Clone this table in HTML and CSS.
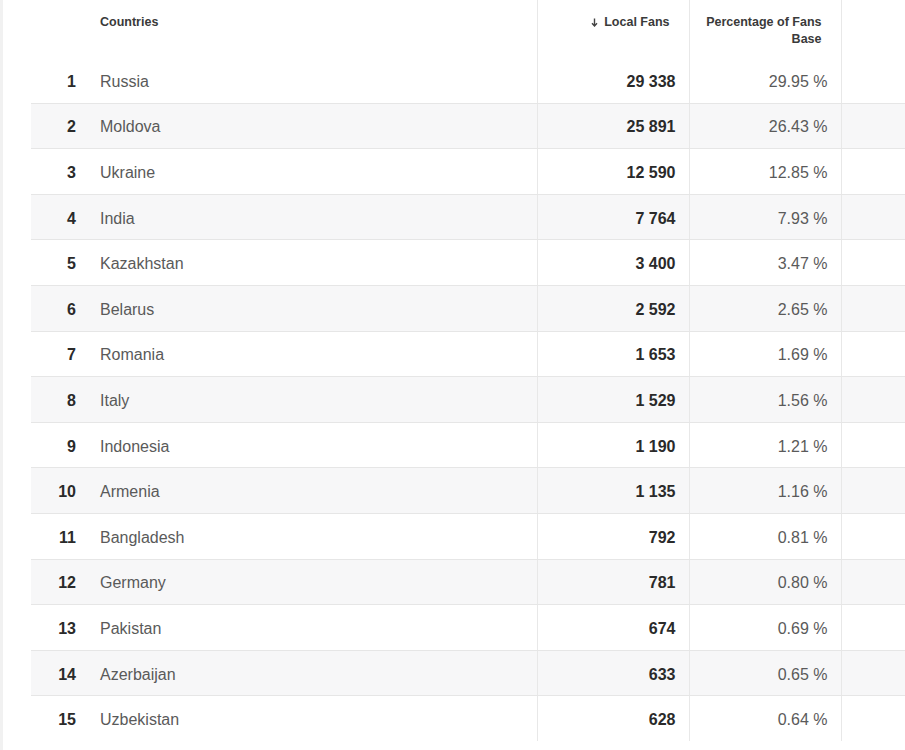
FILE: index.html
```html
<!DOCTYPE html>
<html>
<head>
<meta charset="utf-8">
<link rel="stylesheet" href="styles.css">
</head>
<body>
<div class="page">
  <table class="fans">
    <thead>
      <tr>
        <th class="c-rank"></th>
        <th class="c-country">Countries</th>
        <th class="c-fans"><svg class="arrow" width="7" height="9" viewBox="0 0 7 9"><path d="M3.5 0.5V7.5M1 5.2L3.5 8L6 5.2" stroke="#444" stroke-width="1.4" fill="none"/></svg>Local Fans</th>
        <th class="c-pct">Percentage of Fans<br>Base</th>
        <th class="c-rest"></th>
      </tr>
    </thead>
    <tbody>
      <tr><td class="c-rank">1</td><td class="c-country">Russia</td><td class="c-fans">29 338</td><td class="c-pct">29.95 %</td><td class="c-rest"></td></tr>
      <tr><td class="c-rank">2</td><td class="c-country">Moldova</td><td class="c-fans">25 891</td><td class="c-pct">26.43 %</td><td class="c-rest"></td></tr>
      <tr><td class="c-rank">3</td><td class="c-country">Ukraine</td><td class="c-fans">12 590</td><td class="c-pct">12.85 %</td><td class="c-rest"></td></tr>
      <tr><td class="c-rank">4</td><td class="c-country">India</td><td class="c-fans">7 764</td><td class="c-pct">7.93 %</td><td class="c-rest"></td></tr>
      <tr><td class="c-rank">5</td><td class="c-country">Kazakhstan</td><td class="c-fans">3 400</td><td class="c-pct">3.47 %</td><td class="c-rest"></td></tr>
      <tr><td class="c-rank">6</td><td class="c-country">Belarus</td><td class="c-fans">2 592</td><td class="c-pct">2.65 %</td><td class="c-rest"></td></tr>
      <tr><td class="c-rank">7</td><td class="c-country">Romania</td><td class="c-fans">1 653</td><td class="c-pct">1.69 %</td><td class="c-rest"></td></tr>
      <tr><td class="c-rank">8</td><td class="c-country">Italy</td><td class="c-fans">1 529</td><td class="c-pct">1.56 %</td><td class="c-rest"></td></tr>
      <tr><td class="c-rank">9</td><td class="c-country">Indonesia</td><td class="c-fans">1 190</td><td class="c-pct">1.21 %</td><td class="c-rest"></td></tr>
      <tr><td class="c-rank">10</td><td class="c-country">Armenia</td><td class="c-fans">1 135</td><td class="c-pct">1.16 %</td><td class="c-rest"></td></tr>
      <tr><td class="c-rank">11</td><td class="c-country">Bangladesh</td><td class="c-fans">792</td><td class="c-pct">0.81 %</td><td class="c-rest"></td></tr>
      <tr><td class="c-rank">12</td><td class="c-country">Germany</td><td class="c-fans">781</td><td class="c-pct">0.80 %</td><td class="c-rest"></td></tr>
      <tr><td class="c-rank">13</td><td class="c-country">Pakistan</td><td class="c-fans">674</td><td class="c-pct">0.69 %</td><td class="c-rest"></td></tr>
      <tr><td class="c-rank">14</td><td class="c-country">Azerbaijan</td><td class="c-fans">633</td><td class="c-pct">0.65 %</td><td class="c-rest"></td></tr>
      <tr class="last"><td class="c-rank">15</td><td class="c-country">Uzbekistan</td><td class="c-fans">628</td><td class="c-pct">0.64 %</td><td class="c-rest"></td></tr>
    </tbody>
  </table>
</div>
</body>
</html>
```
FILE: styles.css
```css
html, body {
  margin: 0;
  padding: 0;
  background: #f1f1f1;
  font-family: "Liberation Sans", Arial, sans-serif;
}
.page {
  margin-left: 3px;
  background: #ffffff;
  min-height: 750px;
  padding-left: 28px;
}
.fans {
  border-collapse: collapse;
  width: 874px;
  table-layout: fixed;
}
.fans th, .fans td {
  padding: 0;
}
.fans th {
  height: 57.5px;
  vertical-align: top;
  padding-top: 14px;
  box-sizing: border-box;
  font-size: 12.5px;
  line-height: 17px;
  font-weight: bold;
  color: #3a3a3a;
}
.fans td {
  box-sizing: border-box;
  height: 45.6px;
  padding-top: 3px;
  vertical-align: middle;
  font-size: 16px;
  border-bottom: 1px solid #e6e6e6;
}
.fans tr.last td {
  border-bottom: none;
}
.fans tbody tr:nth-child(even) td {
  background: #f7f7f8;
}
.c-rank {
  width: 58px;
  text-align: right;
}
td.c-rank {
  padding-right: 13px;
  font-weight: bold;
  color: #2a2a2a;
}
.c-country {
  width: 448px;
  text-align: left;
}
.fans .c-country {
  padding-left: 11px;
}
td.c-country {
  color: #5a5a5a;
}
.c-fans {
  width: 152px;
  text-align: right;
  border-left: 1px solid #e8e8e8;
}
th.c-fans {
  padding-right: 19px;
}
td.c-fans {
  padding-right: 13px;
  font-weight: bold;
  color: #2a2a2a;
}
.c-pct {
  width: 152px;
  text-align: right;
  border-left: 1px solid #e8e8e8;
}
th.c-pct {
  padding-right: 19px;
}
td.c-pct {
  padding-right: 13px;
  color: #5a5a5a;
}
.c-rest {
  border-left: 1px solid #e8e8e8;
}
.arrow {
  vertical-align: -1px;
  margin-right: 6px;
}
```
